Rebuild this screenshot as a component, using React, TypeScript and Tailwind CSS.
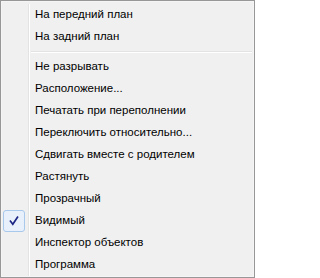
import React from "react";

type Item = { label: string; checked?: boolean } | "sep";

const items: Item[] = [
  { label: "На передний план" },
  { label: "На задний план" },
  "sep",
  { label: "Не разрывать" },
  { label: "Расположение..." },
  { label: "Печатать при переполнении" },
  { label: "Переключить относительно..." },
  { label: "Сдвигать вместе с родителем" },
  { label: "Растянуть" },
  { label: "Прозрачный" },
  { label: "Видимый", checked: true },
  { label: "Инспектор объектов" },
  { label: "Программа" },
];

function Check() {
  return (
    <div className="ml-[1px] flex h-[22px] w-[22px] items-center justify-center rounded-[3px] border border-[#a8c8ec] bg-[#e8f1fb]">
      <svg width="10" height="10" viewBox="0 0 10 10" fill="none">
        <path d="M1.5 5.2 L3.8 8.2 L8.5 1.2" stroke="#1b2585" strokeWidth="1.7" strokeLinecap="square" />
      </svg>
    </div>
  );
}

export default function App() {
  return (
    <div className="h-[278px] w-[255px] overflow-hidden border border-[#979797] bg-[#f0f0f0] font-['Liberation_Sans',Arial,sans-serif] text-[11.5px] text-black">
      <div className="flex h-full border border-[#f5f5f5] pt-[2px]">
        {/* gutter column */}
        <div className="w-[27px] border-r border-[#e2e3e3]">
          {items.map((it, i) =>
            it === "sep" ? (
              <div key={i} className="h-[8px]" />
            ) : (
              <div key={i} className="flex h-[22px] items-center">
                {it.checked ? <Check /> : null}
              </div>
            )
          )}
        </div>
        {/* labels */}
        <div className="flex-1 border-l border-white">
          {items.map((it, i) =>
            it === "sep" ? (
              <div key={i} className="flex h-[8px] flex-col justify-center pl-[1px] pr-[1px]">
                <div className="h-px bg-[#e2e3e3]" />
                <div className="h-px bg-white" />
              </div>
            ) : (
              <div key={i} className="flex h-[22px] items-center pl-[5px] whitespace-nowrap">
                {it.label}
              </div>
            )
          )}
        </div>
      </div>
    </div>
  );
}
